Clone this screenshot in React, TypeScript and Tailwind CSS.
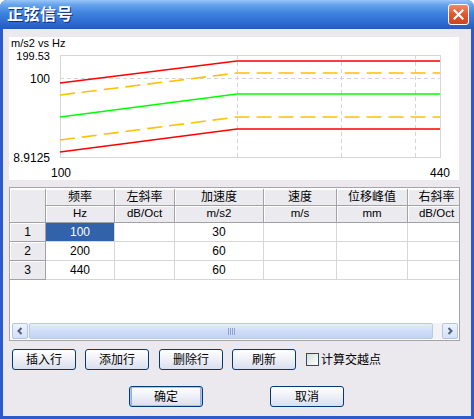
import React from 'react';

const font = "font-['Liberation_Sans','Noto_Sans_CJK_SC',sans-serif]";

const cols = [36, 69, 60, 89, 73, 71, 58];
const headTop = ['频率', '左斜率', '加速度', '速度', '位移峰值', '右斜率'];
const headUnit = ['Hz', 'dB/Oct', 'm/s2', 'm/s', 'mm', 'dB/Oct'];
const rows = [
  ['100', '', '30', '', '', ''],
  ['200', '', '60', '', '', ''],
  ['440', '', '60', '', '', ''],
];

function Chart() {
  // coordinates are relative to the white chart panel (450 x 143)
  const series = [
    { c: '#ff0000', a: 46, b: 24, dash: undefined },
    { c: '#ffc000', a: 58, b: 36, dash: '15 7' },
    { c: '#00ff00', a: 80, b: 57, dash: undefined },
    { c: '#ffc000', a: 103, b: 80, dash: '15 7' },
    { c: '#ff0000', a: 115, b: 92, dash: undefined },
  ];
  return (
    <svg width="450" height="143" className="block">
      <g fontFamily="'Liberation Sans', sans-serif" fontSize="12" fill="#000">
        <text x="2" y="10" fontSize="11">m/s2 vs Hz</text>
        <text x="41" y="23" textAnchor="end" fontSize="11">199.53</text>
        <text x="41" y="46" textAnchor="end">100</text>
        <text x="41" y="125" textAnchor="end">8.9125</text>
        <text x="42" y="140">100</text>
        <text x="421" y="140">440</text>
      </g>
      <g stroke="#d4d4d4" strokeWidth="1" strokeDasharray="4 3" shapeRendering="crispEdges">
        <line x1="51" y1="41.5" x2="431" y2="41.5" />
        <line x1="228.5" y1="18" x2="228.5" y2="120" />
        <line x1="332.5" y1="18" x2="332.5" y2="120" />
        <line x1="406.5" y1="18" x2="406.5" y2="120" />
      </g>
      <rect x="51.5" y="18.5" width="380" height="102" fill="none" stroke="#d6d6d6" strokeWidth="1" />
      {series.map((s, i) => (
        <polyline
          key={i}
          points={`51,${s.a} 228,${s.b} 431,${s.b}`}
          fill="none"
          stroke={s.c}
          strokeWidth="1.6"
          strokeDasharray={s.dash}
        />
      ))}
    </svg>
  );
}

function HeadCell({ children, className = '' }: { children?: React.ReactNode; className?: string }) {
  return (
    <div
      className={`bg-[#ebeaef] border-r border-b border-[#a2a2a6] shadow-[inset_1px_1px_0_#ffffff] flex items-center justify-center whitespace-nowrap overflow-hidden ${className}`}
    >
      {children}
    </div>
  );
}

function Grid() {
  return (
    <div className="w-[451px] h-[154px] border border-[#a5a5a9] bg-white flex flex-col overflow-hidden">
      <div className="pt-[1px] overflow-hidden">
        <div
          className="grid w-[456px] text-[12px] text-black"
          style={{ gridTemplateColumns: cols.map((c) => `${c}px`).join(' ') }}
        >
          <HeadCell className="row-span-2 h-[34px]" />
          {headTop.map((h) => (
            <HeadCell key={h} className="h-[17px]">
              {h}
            </HeadCell>
          ))}
          {headUnit.map((h, i) => (
            <HeadCell key={i} className="h-[17px] text-[11.5px]">
              {h}
            </HeadCell>
          ))}
          {rows.map((r, ri) => (
            <React.Fragment key={ri}>
              <HeadCell className="h-[19px] text-[12px]">{ri + 1}</HeadCell>
              {r.map((v, ci) => (
                <div
                  key={ci}
                  className={`h-[19px] border-r border-b border-[#d6d6d6] flex items-center justify-center text-[12px] ${
                    ri === 0 && ci === 0 ? 'bg-[#3162aa] text-white' : ''
                  }`}
                >
                  {v}
                </div>
              ))}
            </React.Fragment>
          ))}
        </div>
      </div>
      <div className="flex-1" />
      {/* horizontal scrollbar */}
      <div className="h-[16px] ml-[2px] mr-[1px] mb-[1px] flex bg-[#f3f3f6]">
        <ScrollBtn dir="left" />
        <div className="ml-[1px] w-[404px] rounded-[2px] border border-[#b8c8e8] bg-[linear-gradient(to_bottom,#e6edfb,#cfdcf6_50%,#c2d3f3)] flex items-center justify-center">
          <div className="flex gap-[1px]">
            <span className="w-[1px] h-[7px] bg-[#8ea3cf]" />
            <span className="w-[1px] h-[7px] bg-[#8ea3cf]" />
            <span className="w-[1px] h-[7px] bg-[#8ea3cf]" />
            <span className="w-[1px] h-[7px] bg-[#8ea3cf]" />
          </div>
        </div>
        <div className="flex-1" />
        <ScrollBtn dir="right" />
      </div>
    </div>
  );
}

function ScrollBtn({ dir }: { dir: 'left' | 'right' }) {
  return (
    <div className="w-[16px] h-[16px] rounded-[2px] border border-[#b3c4e6] bg-[linear-gradient(to_bottom,#eef3fd,#d4e0f8)] flex items-center justify-center">
      <svg width="8" height="8" viewBox="0 0 8 8">
        <polyline
          points={dir === 'left' ? '5.5,1 2.5,4 5.5,7' : '2.5,1 5.5,4 2.5,7'}
          fill="none"
          stroke="#4d6185"
          strokeWidth="2"
        />
      </svg>
    </div>
  );
}

function XpButton({ children, w = 64, def = false, className = '' }: { children: React.ReactNode; w?: number; def?: boolean; className?: string }) {
  return (
    <button
      className={`h-[21px] rounded-[3px] border border-[#003c74] bg-[linear-gradient(to_bottom,#ffffff,#f2f3f8_40%,#d9dfee)] text-[12px] text-black flex items-center justify-center ${
        def ? 'shadow-[inset_0_0_0_1px_#a9c4f0,inset_2px_0_0_#8bb0ea,inset_-2px_0_0_#8bb0ea]' : ''
      } ${className}`}
      style={{ width: w }}
    >
      {children}
    </button>
  );
}

export default function App() {
  return (
    <div className={`w-[474px] h-[419px] flex flex-col bg-[#2b5bcc] rounded-t-[7px] overflow-hidden ${font}`}>
      <div className="h-[29px] shrink-0 flex items-center justify-between pl-[7px] pr-[5px] bg-[linear-gradient(to_bottom,#9ac6f8_0%,#6aa6ee_15%,#3f83de_45%,#2f6dd4_75%,#2758c0_100%)]">
        <span className="text-white font-bold text-[16px] tracking-[0.5px] [text-shadow:1px_1px_0_#10307a]">正弦信号</span>
        <div className="w-[21px] h-[21px] rounded-[3px] border border-white bg-[linear-gradient(to_bottom,#f08a6a,#e0562f_50%,#cc4420)] flex items-center justify-center">
          <svg width="11" height="11" viewBox="0 0 11 11">
            <path d="M1.5 1.5 L9.5 9.5 M9.5 1.5 L1.5 9.5" stroke="#fff" strokeWidth="2.2" strokeLinecap="square" />
          </svg>
        </div>
      </div>
      <div className="flex-1 mx-[3px] mb-[3px] bg-[#ebe9ee] flex flex-col pl-[6px] pt-[8px]">
        <div className="w-[450px] h-[143px] bg-white">
          <Chart />
        </div>
        <div className="mt-[7px]">
          <Grid />
        </div>
        <div className="mt-[8px] pl-[3px] flex items-center">
          <XpButton>插入行</XpButton>
          <XpButton className="ml-[9px]">添加行</XpButton>
          <XpButton className="ml-[10px]">删除行</XpButton>
          <XpButton className="ml-[9px]">刷新</XpButton>
          <div className="ml-[10px] w-[13px] h-[13px] border border-[#1c5180] bg-[linear-gradient(135deg,#dcdcd7,#ffffff)]" />
          <span className="ml-[2px] text-[12px] text-black">计算交越点</span>
        </div>
        <div className="mt-[16px] flex">
          <XpButton w={74} def className="ml-[120px]">
            确定
          </XpButton>
          <XpButton w={74} className="ml-[67px]">
            取消
          </XpButton>
        </div>
      </div>
    </div>
  );
}
